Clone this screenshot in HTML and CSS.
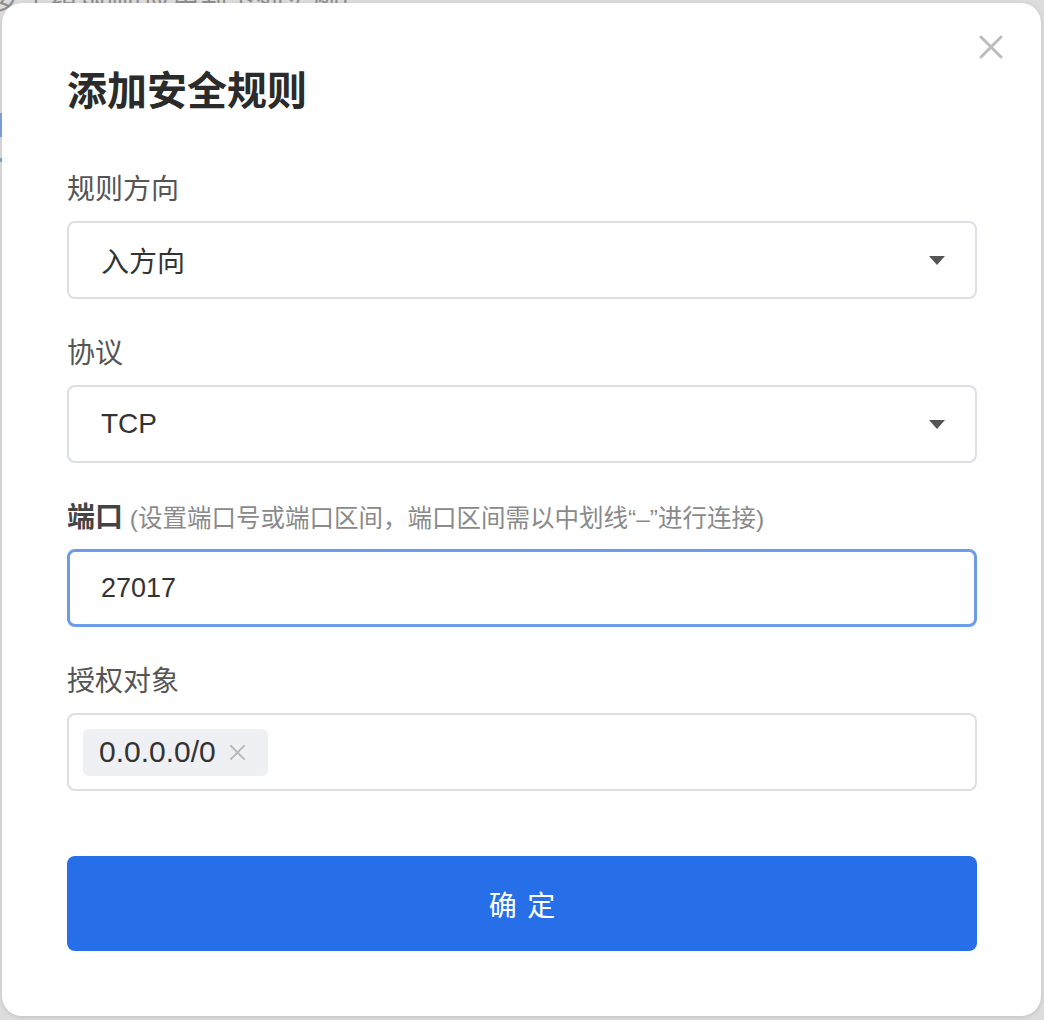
FILE: index.html
```html
<!DOCTYPE html>
<html lang="zh-CN">
<head>
<meta charset="utf-8">
<title>添加安全规则</title>
<link rel="stylesheet" href="styles.css">
</head>
<body>
<div class="page">
  <div class="page-text">安全组规则(应用到下列实例)</div>
  <div class="page-mark mark-a"></div>
  <div class="page-mark mark-b"></div>
</div>
<div class="overlay">
  <div class="modal">
    <button class="close" aria-label="关闭">
      <svg viewBox="0 0 24 24" width="24" height="24"><path d="M2 2 L22 22 M22 2 L2 22" stroke="#bdbdbd" stroke-width="3" stroke-linecap="round" fill="none"/></svg>
    </button>
    <h1 class="title">添加安全规则</h1>

    <div class="field">
      <div class="label">规则方向</div>
      <div class="control select">
        <span>入方向</span>
        <span class="caret"></span>
      </div>
    </div>

    <div class="field">
      <div class="label">协议</div>
      <div class="control select">
        <span>TCP</span>
        <span class="caret"></span>
      </div>
    </div>

    <div class="field">
      <div class="label"><b>端口</b><span class="hint"> (设置端口号或端口区间，端口区间需以中划线“–”进行连接)</span></div>
      <div class="control input focused">27017</div>
    </div>

    <div class="field">
      <div class="label">授权对象</div>
      <div class="control tags">
        <span class="tag">0.0.0.0/0
          <svg viewBox="0 0 16 16" width="19" height="19"><path d="M2 2 L14 14 M14 2 L2 14" stroke="#b4b8bf" stroke-width="1.7" fill="none"/></svg>
        </span>
      </div>
    </div>

    <button class="submit">确 定</button>
  </div>
</div>
</body>
</html>
```

FILE: styles.css
```css
html, body {
  margin: 0;
  padding: 0;
}
body {
  width: 1044px;
  height: 1020px;
  overflow: hidden;
  background: #dcdcdc;
  font-family: "Liberation Sans", "Noto Sans CJK SC", sans-serif;
  position: relative;
}
.page {
  height: 1020px;
  position: relative;
}
.page-text {
  position: absolute;
  top: -22px;
  left: -6px;
  font-size: 28px;
  color: #8e8e8e;
  font-family: "Noto Sans CJK SC", sans-serif;
}
.page-mark {
  position: absolute;
  left: 0;
  width: 2px;
  background: #7fa3e0;
}
.mark-a { top: 113px; height: 24px; }
.mark-b { top: 158px; height: 4px; }

.overlay {
  position: absolute;
  inset: 0;
  padding: 3px 3px 0 2px;
}
.modal {
  position: relative;
  box-sizing: border-box;
  width: 1039px;
  height: 1013px;
  background: #fff;
  border-radius: 20px;
  box-shadow: 0 1px 4px rgba(0,0,0,0.12);
  padding: 57px 64px 0 65px;
  display: flex;
  flex-direction: column;
}
.close {
  position: absolute;
  top: 32px;
  right: 38px;
  width: 24px;
  height: 24px;
  padding: 0;
  border: 0;
  background: none;
  display: flex;
}
.title {
  margin: 0;
  height: 56px;
  font-family: "Noto Sans CJK SC", sans-serif;
  font-size: 40px;
  line-height: 56px;
  font-weight: 700;
  color: #2b2b2b;
}
.field {
  margin-top: 32px;
  display: flex;
  flex-direction: column;
}
.title + .field {
  margin-top: 51px;
}
.label {
  height: 40px;
  font-family: "Noto Sans CJK SC", sans-serif;
  font-size: 28px;
  line-height: 40px;
  color: #555;
  margin-bottom: 14px;
  white-space: nowrap;
  overflow: hidden;
}
.label b {
  font-weight: 700;
  color: #444;
}
.hint {
  font-family: "Liberation Sans", "Noto Sans CJK SC", sans-serif;
  font-size: 24.5px;
  color: #8a8a8a;
}
.control {
  box-sizing: border-box;
  height: 78px;
  flex: 0 0 78px;
  border: 2px solid #dcdfe4;
  border-radius: 8px;
  display: flex;
  align-items: center;
  padding: 0 30px 0 32px;
  font-size: 28px;
  color: #333;
}
.select {
  justify-content: space-between;
  font-family: "Liberation Sans", "Noto Sans CJK SC", sans-serif;
}
.caret {
  width: 0;
  height: 0;
  border-left: 8px solid transparent;
  border-right: 8px solid transparent;
  border-top: 9px solid #555;
}
.input.focused {
  border: 3px solid #6c9ce9;
  padding-left: 31px;
  font-size: 27px;
}
.tags {
  padding-left: 14px;
}
.tag {
  display: inline-flex;
  align-items: center;
  gap: 12px;
  height: 47px;
  padding: 0 21px 0 16px;
  background: #eef0f3;
  border-radius: 6px;
  font-size: 30px;
  color: #333;
}
.submit {
  margin-top: 65px;
  height: 95px;
  flex: 0 0 95px;
  border: 0;
  border-radius: 8px;
  background: #276ee9;
  color: #fff;
  font-family: "Noto Sans CJK SC", sans-serif;
  font-size: 28px;
  letter-spacing: 2px;
  padding: 0 0 0 2px;
}
```
